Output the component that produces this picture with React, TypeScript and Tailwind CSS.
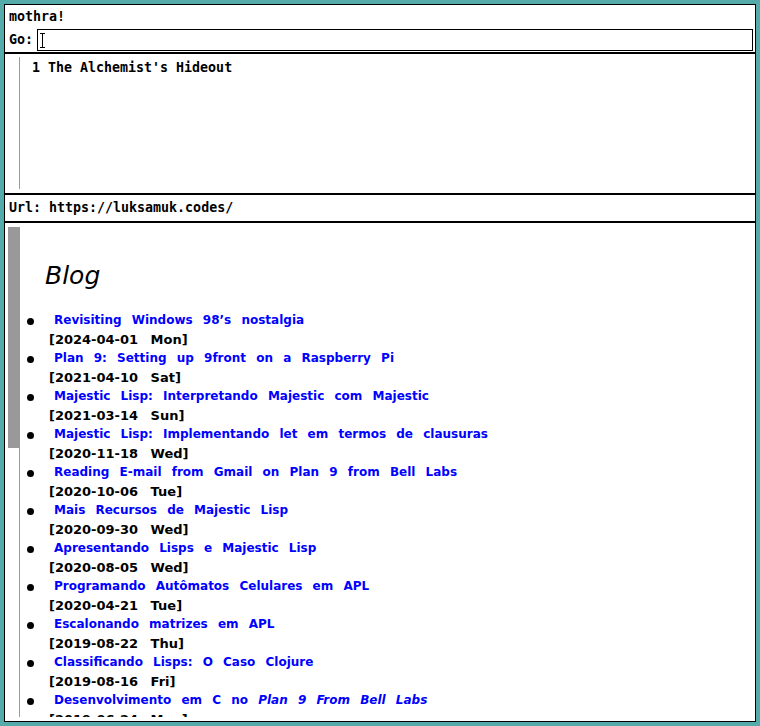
import React from "react";

type Post = { title: React.ReactNode; date: string };

const posts: Post[] = [
  { title: "Revisiting Windows 98’s nostalgia", date: "[2024-04-01 Mon]" },
  { title: "Plan 9: Setting up 9front on a Raspberry Pi", date: "[2021-04-10 Sat]" },
  { title: "Majestic Lisp: Interpretando Majestic com Majestic", date: "[2021-03-14 Sun]" },
  { title: "Majestic Lisp: Implementando let em termos de clausuras", date: "[2020-11-18 Wed]" },
  { title: "Reading E-mail from Gmail on Plan 9 from Bell Labs", date: "[2020-10-06 Tue]" },
  { title: "Mais Recursos de Majestic Lisp", date: "[2020-09-30 Wed]" },
  { title: "Apresentando Lisps e Majestic Lisp", date: "[2020-08-05 Wed]" },
  { title: "Programando Autômatos Celulares em APL", date: "[2020-04-21 Tue]" },
  { title: "Escalonando matrizes em APL", date: "[2019-08-22 Thu]" },
  { title: "Classificando Lisps: O Caso Clojure", date: "[2019-08-16 Fri]" },
  {
    title: (
      <>
        Desenvolvimento em C no <i>Plan 9 From Bell Labs</i>
      </>
    ),
    date: "[2019-06-24 Mon]",
  },
];

const mono = "font-['DejaVu_Sans_Mono',monospace] font-bold text-[13.3px] leading-[16px] text-black whitespace-pre";

function Cursor() {
  return (
    <svg width="5" height="15" viewBox="0 0 5 15" className="ml-[2px] mt-[3px] shrink-0">
      <path d="M0 0.5H5M0 14.5H5M2.5 0V15" stroke="black" strokeWidth="1" />
    </svg>
  );
}

export default function App() {
  return (
    <div className="w-[760px] h-[726px] bg-[#55aaaa] p-1">
      <div className="h-full border border-black bg-white flex flex-col">
        <div className={`h-[24px] flex items-center pl-[4px] ${mono}`}>mothra!</div>
        <div className="h-[23px] flex items-start pl-[4px] pr-[2px]">
          <span className={`h-[22px] flex items-center ${mono}`}>Go:</span>
          <div className="flex-1 h-[22px] ml-[4px] border border-black flex items-start">
            <Cursor />
          </div>
        </div>
        <div className="h-[2px] bg-black" />

        <div className="h-[139px] flex">
          <div className="w-[12px] ml-[3px] mt-[3px] mb-[4px] border-r border-[#999999]" />
          <div className={`ml-[12px] mt-[6px] ${mono}`}>1 The Alchemist's Hideout</div>
        </div>
        <div className="h-[2px] bg-black" />

        <div className={`h-[26px] flex items-center pl-[4px] ${mono}`}>Url: https://luksamuk.codes/</div>
        <div className="h-[2px] bg-black" />

        <div className="flex-1 min-h-0 flex">
          <div className="w-[12px] ml-[3px] mt-[4px] mb-[4px] border-r border-[#999999]">
            <div className="h-[221px] bg-[#999999]" />
          </div>
          <div className="flex-1 mb-[4px] overflow-hidden pt-[39px] font-['DejaVu_Sans',sans-serif] font-bold leading-[19px]">
            <h1 className="ml-[25px] h-[28px] leading-[28px] text-[25px] font-normal italic text-black">
              Blog
            </h1>
            <ul className="mt-[21px]">
              {posts.map((p, i) => (
                <li key={i} className="flex">
                  <div className="w-[29px] shrink-0 pt-[7px]">
                    <div className="ml-[7px] w-[7px] h-[7px] rounded-full bg-black" />
                  </div>
                  <div className="flex flex-col">
                    <span className="pl-[5px] text-[12px] [word-spacing:6px] text-[#0000ff] whitespace-nowrap">
                      {p.title}
                    </span>
                    <span className="text-[13px] [word-spacing:8px] text-black whitespace-nowrap">{p.date}</span>
                  </div>
                </li>
              ))}
            </ul>
          </div>
        </div>
      </div>
    </div>
  );
}
